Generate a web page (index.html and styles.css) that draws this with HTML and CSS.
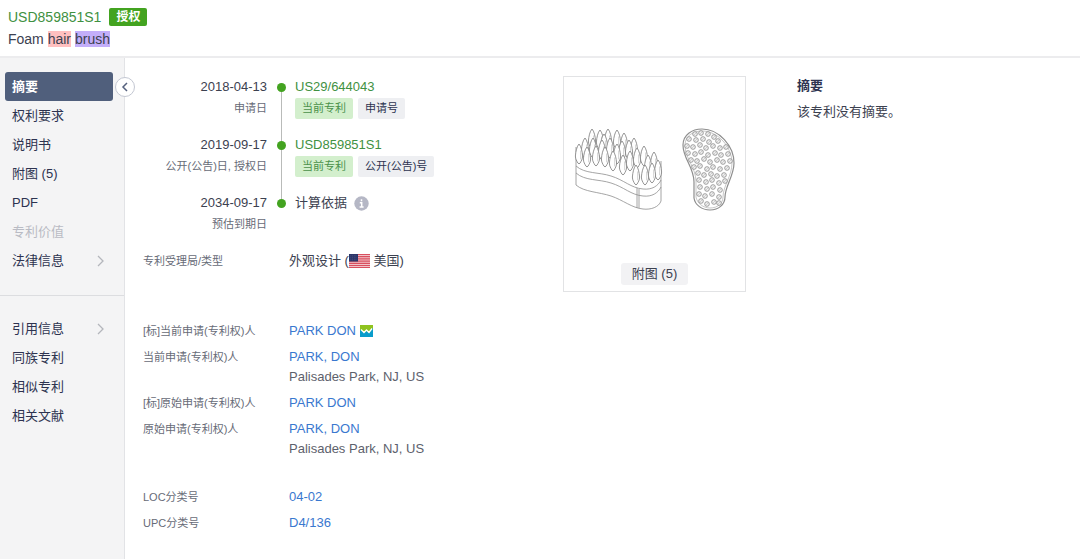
FILE: index.html
```html
<!DOCTYPE html>
<html lang="zh-CN">
<head>
    <meta charset="UTF-8">
    <meta name="viewport" content="width=device-width, initial-scale=1.0">
    <title>USD859851S1</title>
    <link rel="stylesheet" href="styles.css">
</head>
<body>
    <header class="header">
        <div class="header-row">
            <a href="#" class="patent-number">USD859851S1</a>
            <span class="status">授权</span>
        </div>
        <h1>Foam <mark class="hit-red">hair</mark> <mark class="hit-purple">brush</mark></h1>
    </header>

    <div class="layout">
        <!-- Sidebar -->
        <aside class="sidebar">
            <button class="collapse" aria-label="收起">
                <svg width="8" height="10" viewBox="0 0 8 10"><path d="M6 1 2 5l4 4" fill="none" stroke="#55617e" stroke-width="1.5"/></svg>
            </button>
            <nav>
                <ul class="menu">
                    <li><a href="#" class="active">摘要</a></li>
                    <li><a href="#">权利要求</a></li>
                    <li><a href="#">说明书</a></li>
                    <li><a href="#">附图 (5)</a></li>
                    <li><a href="#">PDF</a></li>
                    <li><a class="disabled">专利价值</a></li>
                    <li><a href="#">法律信息 <svg width="8" height="12" viewBox="0 0 8 12"><path d="m1 1 5 5-5 5" fill="none" stroke="#b4b6bc" stroke-width="1.3"/></svg></a></li>
                </ul>
                <ul class="menu">
                    <li><a href="#">引用信息 <svg width="8" height="12" viewBox="0 0 8 12"><path d="m1 1 5 5-5 5" fill="none" stroke="#b4b6bc" stroke-width="1.3"/></svg></a></li>
                    <li><a href="#">同族专利</a></li>
                    <li><a href="#">相似专利</a></li>
                    <li><a href="#">相关文献</a></li>
                </ul>
            </nav>
        </aside>

        <main class="content">
            <section class="details">
                <!-- Timeline -->
                <ol class="timeline">
                    <li>
                        <div class="when">
                            <time>2018-04-13</time>
                            <small>申请日</small>
                        </div>
                        <div class="track"></div>
                        <div class="what">
                            <a href="#" class="green">US29/644043</a>
                            <div class="tags"><span class="tag current">当前专利</span><span class="tag">申请号</span></div>
                        </div>
                    </li>
                    <li>
                        <div class="when">
                            <time>2019-09-17</time>
                            <small>公开(公告)日, 授权日</small>
                        </div>
                        <div class="track"></div>
                        <div class="what">
                            <a href="#" class="green">USD859851S1</a>
                            <div class="tags"><span class="tag current">当前专利</span><span class="tag">公开(公告)号</span></div>
                        </div>
                    </li>
                    <li>
                        <div class="when">
                            <time>2034-09-17</time>
                            <small>预估到期日</small>
                        </div>
                        <div class="track"></div>
                        <div class="what">
                            <span class="basis">计算依据
                                <svg width="15" height="15" viewBox="0 0 15 15"><circle cx="7.5" cy="7.5" r="7.2" fill="#b5b7c5"/><path d="M7.5 3.2v2M5.8 6.8h1.9v4M5.6 11h4" fill="none" stroke="#fff" stroke-width="1.5"/></svg>
                            </span>
                        </div>
                    </li>
                </ol>

                <!-- Bibliographic data -->
                <dl class="info">
                    <dt>专利受理局/类型</dt>
                    <dd class="office">外观设计 (<svg width="21" height="14" viewBox="0 0 21 14">
                        <rect width="21" height="14" fill="#f0c3c9"/>
                        <path d="M0 .5h21M0 2.7h21M0 4.9h21M0 7.1h21M0 9.3h21M0 11.5h21M0 13.5h21" stroke="#d9505f" stroke-width="1.2"/>
                        <rect width="9" height="7.5" fill="#2c3568"/>
                        <path d="M1.5 1.8h6.5M1.5 3.8h6.5M1.5 5.8h6.5" stroke="#6a719c" stroke-width=".6" stroke-dasharray=".7 1"/>
                    </svg>&nbsp;美国)</dd>
                </dl>
                <dl class="info applicants">
                    <dt>[标]当前申请(专利权)人</dt>
                    <dd><a href="#">PARK DON</a>
                        <svg class="logo" width="13" height="12" viewBox="0 0 13 12">
                            <rect width="13" height="12" fill="#8fc31f"/>
                            <path d="M0 4.5 4 8l2.5-2L9 8l4-5v9H0z" fill="#0a9ccb"/>
                            <path d="m1 4.500 3 3L6.500 5 9 7.500 12 3.500" fill="none" stroke="#fff" stroke-width="1.3"/>
                        </svg>
                    </dd>
                    <dt>当前申请(专利权)人</dt>
                    <dd><a href="#">PARK, DON</a><br>Palisades Park, NJ, US</dd>
                    <dt>[标]原始申请(专利权)人</dt>
                    <dd><a href="#">PARK DON</a></dd>
                    <dt>原始申请(专利权)人</dt>
                    <dd><a href="#">PARK, DON</a><br>Palisades Park, NJ, US</dd>
                </dl>
                <dl class="info classes">
                    <dt>LOC分类号</dt>
                    <dd><a href="#">04-02</a></dd>
                    <dt>UPC分类号</dt>
                    <dd><a href="#">D4/136</a></dd>
                </dl>
            </section>

            <!-- Drawing -->
            <figure class="drawing">
                <svg width="170" height="96" viewBox="0 0 170 96" fill="none" stroke="#8e8e8e" stroke-width=".8">
                    <defs>
                        <marker id="bristle" markerUnits="userSpaceOnUse" markerWidth="11" markerHeight="24" refX="5" refY="1" viewBox="0 0 10 22">
                            <path d="M5 1C3 3 2 8 1.700 12c0 3 1.300 4.500 2.300 6.500q1 1.500 2 0c1-2 2.300-3.500 2.300-6.500C8 8 7 3 5 1z" fill="#fff" stroke="#858585" stroke-width=".8"/>
                            <path d="M6.500 7v8" fill="none" stroke="#bbb" stroke-width=".6"/>
                        </marker>
                        <marker id="bump" markerUnits="userSpaceOnUse" markerWidth="7" markerHeight="7" refX="3" refY="3" viewBox="0 0 6 6">
                            <circle cx="3" cy="3" r="2" fill="#f2f2f2" stroke="#8a8a8a" stroke-width=".7"/>
                            <path d="M2.500 3.500 3.500 2.500" stroke="#999" stroke-width=".6"/>
                        </marker>
                    </defs>
                    <path d="M6 27v38c8 7 23 7 35 11 12 4 21 12 32 13 8 1 16-2 18-8V41M6 46c9 8 23 6 35 10 13 4 20 12 32 13 9 1 15-3 18-9M6 53c9 8 23 6 35 10 13 4 20 12 32 13 9 1 15-3 18-9M67 68v20M69 69v19"/>
                    <path stroke="none" marker-start="url(#bristle)" marker-mid="url(#bristle)" marker-end="url(#bristle)" d="M22 9 30 10 38 9 47 10 54 13 34 14 64 18 15 18 23 18 59 20 40 18 52 21 32 20 74 26 67 28 9 24 47 24 84 32 17 27 26 26 60 31 35 27 78 35 88 40 43 31 53 35 82 43 66 45 75 45"/>
                    <path d="M132 9c-10 0-19 6-19 16 0 14 11 22 11 37v16c1 7 8 12 16 12 9 0 15-6 15-13 0-11 9-21 9-34 0-17-15-34-32-34z" stroke-width="1.200"/>
                    <path d="M132 11c-9 0-17 5-17 14 0 14 11 22 11 37v15c1 6 7 11 14 11 8 0 13-5 13-11 0-11 9-21 9-34 0-16-14-32-30-32z" stroke-width=".5"/>
                    <path stroke="none" marker-start="url(#bump)" marker-mid="url(#bump)" marker-end="url(#bump)" d="M125 14 131 13 138 14 144 17 119 19 126 20 133 19 139 22 148 21 117 26 123 27 130 25 136 28 143 26 150 28 156 27 118 33 125 34 131 32 138 35 145 33 151 35 158 34 121 40 127 41 134 39 140 42 147 40 153 42 160 41 124 47 130 46 137 49 143 47 150 49 157 48 128 53 134 55 141 54 147 56 154 55 129 60 136 62 142 60 149 63 155 61 130 67 137 69 143 67 150 70 129 74 135 76 142 74 149 77 131 81 137 84 144 82 149 83"/>
                </svg>
                <button>附图 (5)</button>
            </figure>

            <!-- Abstract -->
            <section class="abstract">
                <h2>摘要</h2>
                <p>该专利没有摘要。</p>
            </section>
        </main>
    </div>
</body>
</html>
```

FILE: styles.css
```css
* {
    box-sizing: border-box;
}
body {
    font-family: "Liberation Sans", "Noto Sans CJK SC", sans-serif;
    font-size: 13px;
    line-height: 20px;
    color: #3c4150;
    margin: 0;
    min-height: 100vh;
    display: flex;
    flex-direction: column;
    background-color: #fff;
}
a {
    color: #3a78cf;
    text-decoration: none;
}
ul, ol, dl, dd, figure, h1, h2, p {
    margin: 0;
    padding: 0;
    list-style: none;
}
button {
    font: inherit;
    color: inherit;
    border: none;
    cursor: pointer;
}

/* Header */
.header {
    padding: 7px 8px;
    border-bottom: 2px solid #ececee;
}
.header-row {
    display: flex;
    align-items: center;
    gap: 8px;
    height: 20px;
    font-size: 14px;
}
.patent-number,
.green {
    color: #3f9142;
}
.status {
    font-size: 12px;
    font-weight: bold;
    line-height: 18px;
    padding: 0 7px;
    color: #fff;
    background-color: #43a320;
    border-radius: 2px;
}
.header h1 {
    font-size: 14px;
    font-weight: normal;
    line-height: 20px;
    margin-top: 2px;
}
mark {
    color: inherit;
}
.hit-red {
    background-color: #ffc0c0;
}
.hit-purple {
    background-color: #c3aefa;
}

.layout {
    display: flex;
    flex: 1;
}

/* Sidebar */
.sidebar {
    position: relative;
    width: 125px;
    flex-shrink: 0;
    padding-top: 14px;
    background-color: #f4f4f5;
    border-right: 1px solid #e2e3e6;
}
.menu {
    padding: 0 11px 0 5px;
}
.menu + .menu {
    margin-top: 20px;
    padding-top: 18px;
    border-top: 1px solid #dcdde0;
}
.menu a {
    display: flex;
    align-items: center;
    justify-content: space-between;
    height: 29px;
    padding: 0 8px 0 7px;
    color: #2d3350;
    border-radius: 3px;
}
.menu a.active {
    color: #fff;
    font-weight: bold;
    background-color: #505f7c;
}
.menu a.disabled {
    color: #b9bbc4;
}
.collapse {
    position: absolute;
    top: 19px;
    right: -11px;
    width: 20px;
    height: 20px;
    padding: 0;
    display: flex;
    align-items: center;
    justify-content: center;
    background-color: #fff;
    border: 1px solid #c3c7d2;
    border-radius: 50%;
}

/* Content */
.content {
    flex: 1;
    display: grid;
    grid-template-columns: 420px 183px 1fr;
    align-items: start;
    padding: 18px;
}

/* Timeline */
.details {
    padding-top: 1px;
}
.timeline li {
    display: grid;
    grid-template-columns: 124px 28px 1fr;
    height: 58px;
}
.when {
    text-align: right;
}
.when time,
.when small {
    display: block;
}
.when small {
    font-size: 11px;
    line-height: 22px;
    color: #676b77;
}
.track {
    display: flex;
    flex-direction: column;
    align-items: center;
}
.track::before {
    content: "";
    width: 9px;
    height: 9px;
    margin-top: 6px;
    border-radius: 50%;
    background-color: #43a320;
}
.track::after {
    content: "";
    flex: 1;
    width: 1px;
    margin-bottom: -6px;
    background-color: #b9bbb9;
}
.timeline li:last-child .track::after {
    display: none;
}
.tags {
    display: flex;
    gap: 5px;
    margin-top: 1px;
}
.tag {
    font-size: 11px;
    line-height: 21px;
    padding: 0 7px;
    color: #2d3350;
    background-color: #eeeff2;
    border-radius: 2px;
}
.tag.current {
    color: #4a914a;
    background-color: #d3efcd;
}
.basis {
    display: flex;
    align-items: center;
    gap: 7px;
}

/* Bibliographic data */
.info {
    display: grid;
    grid-template-columns: 146px 1fr;
    row-gap: 6px;
}
.info dt {
    font-size: 11px;
    color: #676b77;
}
.info dd {
    color: #5d616c;
}
.info .office {
    display: flex;
    align-items: center;
    white-space: pre;
    color: #3c4150;
}
.applicants {
    margin-top: 50px;
}
.classes {
    margin-top: 28px;
}
.logo {
    vertical-align: -2px;
}

/* Drawing */
.drawing {
    height: 216px;
    display: flex;
    flex-direction: column;
    align-items: center;
    justify-content: space-between;
    padding: 43px 0 6px;
    border: 1px solid #e2e3e5;
}
.drawing button {
    height: 22px;
    padding: 0 11px;
    line-height: 22px;
    background-color: #f2f2f4;
    border-radius: 3px;
}

/* Abstract */
.abstract {
    padding-left: 51px;
}
.abstract h2 {
    font-size: 13px;
    font-weight: bold;
    line-height: 20px;
    color: #2d3350;
}
.abstract p {
    margin-top: 6px;
}
```
